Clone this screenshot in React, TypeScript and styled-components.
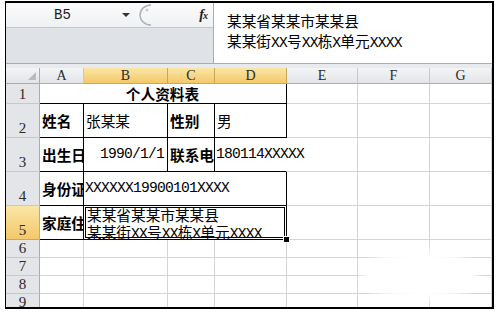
import React from 'react';
import styled, { createGlobalStyle } from 'styled-components';

const Global = createGlobalStyle`
  html, body { margin: 0; padding: 0; background: #fff; }
  body { width: 502px; height: 314px; overflow: hidden; font-family: "Noto Sans CJK SC", sans-serif; }
`;

const Frame = styled.div`
  position: relative;
  margin: 1px 0 0 5px;
  width: 489px;
  height: 308px;
  box-sizing: border-box;
  border: 2px solid #000;
  border-left-width: 1px;
  overflow: hidden;
  display: flex;
  flex-direction: column;
  background: #fff;
`;

const FormulaBar = styled.div`
  display: flex;
  height: 61px;
  flex: none;
  box-sizing: border-box;
  border-bottom: 1px solid #a9adb3;
`;

const NameArea = styled.div`
  width: 207px;
  display: flex;
  flex-direction: column;
  background: #dfe2e6;
`;

const NameRow = styled.div`
  height: 25px;
  box-sizing: border-box;
  display: flex;
  align-items: center;
  background: linear-gradient(#fbfbfc, #eff1f3);
  border-bottom: 1px solid #c5c9ce;
`;

const NameText = styled.div`
  width: 114px;
  box-sizing: border-box;
  padding-left: 48px;
  font-family: "Liberation Mono", monospace;
  font-size: 14px;
  color: #1a1a1a;
`;

const Arrow = styled.div`
  width: 0;
  height: 0;
  margin-left: 2px;
  border-left: 4px solid transparent;
  border-right: 4px solid transparent;
  border-top: 4px solid #333;
`;

const Splitter = styled.svg`
  margin-left: 6px;
  width: 16px;
  height: 22px;
`;

const Fx = styled.div`
  margin-left: auto;
  margin-right: 6px;
  font-family: "Liberation Serif", serif;
  font-style: italic;
  font-weight: bold;
  font-size: 14px;
  color: #222;
  letter-spacing: -1px;
  & span { font-size: 10px; }
`;

const FormulaInput = styled.div`
  flex: 1;
  background: #fff;
  border-left: 1px solid #a9adb3;
  padding: 8px 0 0 13px;
  font-size: 14.67px;
  line-height: 20px;
  color: #000;
`;

const Lat = styled.span`
  font-family: "Liberation Mono", monospace;
  font-size: 14.67px;
  letter-spacing: -0.8px;
`;

const GapStrip = styled.div`
  height: 4px;
  flex: none;
  background: #e8eaed;
`;

const Sheet = styled.div`
  display: grid;
  grid-template-columns: 34px 44px 84px 47px 72px 71px 72px 62px;
  grid-template-rows: 16px 20px 34px 34px 34px 34px 18px 18px 18px 18px;
  font-size: 14.67px;
  color: #000;
`;

const Corner = styled.div`
  box-sizing: border-box;
  background: linear-gradient(#f3f4f5, #e2e4e7);
  border-right: 1px solid #a9adb3;
  border-bottom: 1px solid #a9adb3;
  display: flex;
  align-items: flex-end;
  justify-content: flex-end;
  padding: 0 3px 3px 0;
`;

const ColHead = styled.div<{ $sel?: boolean }>`
  box-sizing: border-box;
  background: ${p => (p.$sel ? 'linear-gradient(#fae6a6, #f4c869)' : 'linear-gradient(#f3f4f5, #e3e5e8)')};
  border-right: 1px solid ${p => (p.$sel ? '#c9a85e' : '#c5c8cc')};
  border-bottom: 1px solid ${p => (p.$sel ? '#d9a640' : '#a9adb3')};
  display: flex;
  align-items: center;
  justify-content: center;
  font-family: "Liberation Serif", serif;
  font-size: 14px;
  color: #2a2a2a;
`;

const RowHead = styled.div<{ $sel?: boolean }>`
  box-sizing: border-box;
  background: ${p => (p.$sel ? 'linear-gradient(#fae6a6, #f4c869)' : '#e3e5e8')};
  border-right: 1px solid ${p => (p.$sel ? '#d9a640' : '#a9adb3')};
  border-bottom: 1px solid ${p => (p.$sel ? '#c9a85e' : '#c5c8cc')};
  display: flex;
  align-items: flex-end;
  justify-content: center;
  padding-bottom: 1px;
  font-family: "Liberation Serif", serif;
  font-size: 15px;
  line-height: 16px;
  color: #2a2a2a;
  overflow: hidden;
`;

type Edge = 'k' | 'g' | 'n';

const Cell = styled.div<{ $r?: Edge; $b?: Edge; $bold?: boolean; $align?: 'left' | 'right' | 'center'; $span?: number; $clip?: boolean; $pl?: number }>`
  box-sizing: border-box;
  grid-column: span ${p => p.$span || 1};
  min-width: 0;
  border-right: 1px solid ${p => (p.$r === 'k' ? '#000' : p.$r === 'n' ? 'transparent' : '#d4d4d4')};
  border-bottom: 1px solid ${p => (p.$b === 'k' ? '#000' : '#d4d4d4')};
  display: flex;
  align-items: center;
  justify-content: ${p => (p.$align === 'right' ? 'flex-end' : p.$align === 'center' ? 'center' : 'flex-start')};
  padding: 0 3px 0 ${p => (p.$pl ?? 2)}px;
  font-weight: ${p => (p.$bold ? 700 : 400)};
  white-space: nowrap;
  overflow: ${p => (p.$clip ? 'hidden' : 'visible')};
  line-height: 17px;
`;

const SelCell = styled.div`
  position: relative;
  box-sizing: border-box;
  grid-column: span 3;
  border-right: 1px solid #000;
  border-bottom: 1px solid #000;
  padding: 0 0 0 3px;
  line-height: 17px;
  white-space: nowrap;
  &::after {
    content: '';
    position: absolute;
    inset: -1px -1px -1px -1px;
    border: 3px double #000;
    pointer-events: none;
  }
  &::before {
    content: '';
    position: absolute;
    right: -4px;
    bottom: -4px;
    width: 5px;
    height: 5px;
    background: #000;
    border: 1px solid #fff;
    z-index: 2;
  }
`;

const Smudge = styled.div`
  position: absolute;
  left: 356px;
  top: 246px;
  width: 116px;
  height: 52px;
  border-radius: 50%;
  background: #fff;
  filter: blur(5px);
`;

const mix = (text: string) =>
  text.split(/([\x00-\x7f]+)/).filter(Boolean).map((part, i) =>
    /^[\x00-\x7f]+$/.test(part) ? <Lat key={i}>{part}</Lat> : <React.Fragment key={i}>{part}</React.Fragment>
  );

const cols = ['A', 'B', 'C', 'D', 'E', 'F', 'G'];

export default function App() {
  return (
    <>
      <Global />
      <Frame>
        <FormulaBar>
          <NameArea>
            <NameRow>
              <NameText>B5</NameText>
              <Arrow />
              <Splitter viewBox="0 0 16 22">
                <path d="M15 1 A 11 10 0 0 0 15 21" fill="none" stroke="#aeb3b9" strokeWidth="1.5" />
                <circle cx="11" cy="6" r="1.5" fill="#c8ccd1" />
              </Splitter>
              <Fx>f<span>x</span></Fx>
            </NameRow>
          </NameArea>
          <FormulaInput>
            <div>某某省某某市某某县</div>
            <div>{mix('某某街XX号XX栋X单元XXXX')}</div>
          </FormulaInput>
        </FormulaBar>
        <GapStrip />
        <Sheet>
          <Corner>
            <svg width="8" height="8" viewBox="0 0 8 8"><path d="M8 0 L8 8 L0 8 Z" fill="#b7bbc1" /></svg>
          </Corner>
          {cols.map(c => (
            <ColHead key={c} $sel={c === 'B' || c === 'C' || c === 'D'}>{c}</ColHead>
          ))}

          <RowHead>1</RowHead>
          <Cell $span={4} $r="k" $b="k" $bold $align="center">个人资料表</Cell>
          <Cell /><Cell /><Cell />

          <RowHead>2</RowHead>
          <Cell $r="k" $b="k" $bold $clip>姓名</Cell>
          <Cell $r="k" $b="k">张某某</Cell>
          <Cell $r="k" $b="k" $bold $clip>性别</Cell>
          <Cell $r="k" $b="k">男</Cell>
          <Cell /><Cell /><Cell />

          <RowHead>3</RowHead>
          <Cell $r="k" $b="k" $bold $clip>出生日期</Cell>
          <Cell $r="k" $b="k" $align="right"><Lat>1990/1/1</Lat></Cell>
          <Cell $r="k" $b="k" $bold $clip>联系电话</Cell>
          <Cell $r="n" $b="k" $pl={1}><Lat>180114XXXXX</Lat></Cell>
          <Cell /><Cell /><Cell />

          <RowHead>4</RowHead>
          <Cell $r="k" $b="k" $bold $clip>身份证号</Cell>
          <Cell $span={3} $r="k" $b="k" $pl={1}><Lat>XXXXXX19900101XXXX</Lat></Cell>
          <Cell /><Cell /><Cell />

          <RowHead $sel>5</RowHead>
          <Cell $r="k" $b="k" $bold $clip>家庭住址</Cell>
          <SelCell>
            <div>某某省某某市某某县</div>
            <div>{mix('某某街XX号XX栋X单元XXXX')}</div>
          </SelCell>
          <Cell /><Cell /><Cell />

          {[6, 7, 8, 9].map(n => (
            <React.Fragment key={n}>
              <RowHead>{n}</RowHead>
              {cols.map(c => <Cell key={c} />)}
            </React.Fragment>
          ))}
        </Sheet>
        <Smudge />
      </Frame>
    </>
  );
}
